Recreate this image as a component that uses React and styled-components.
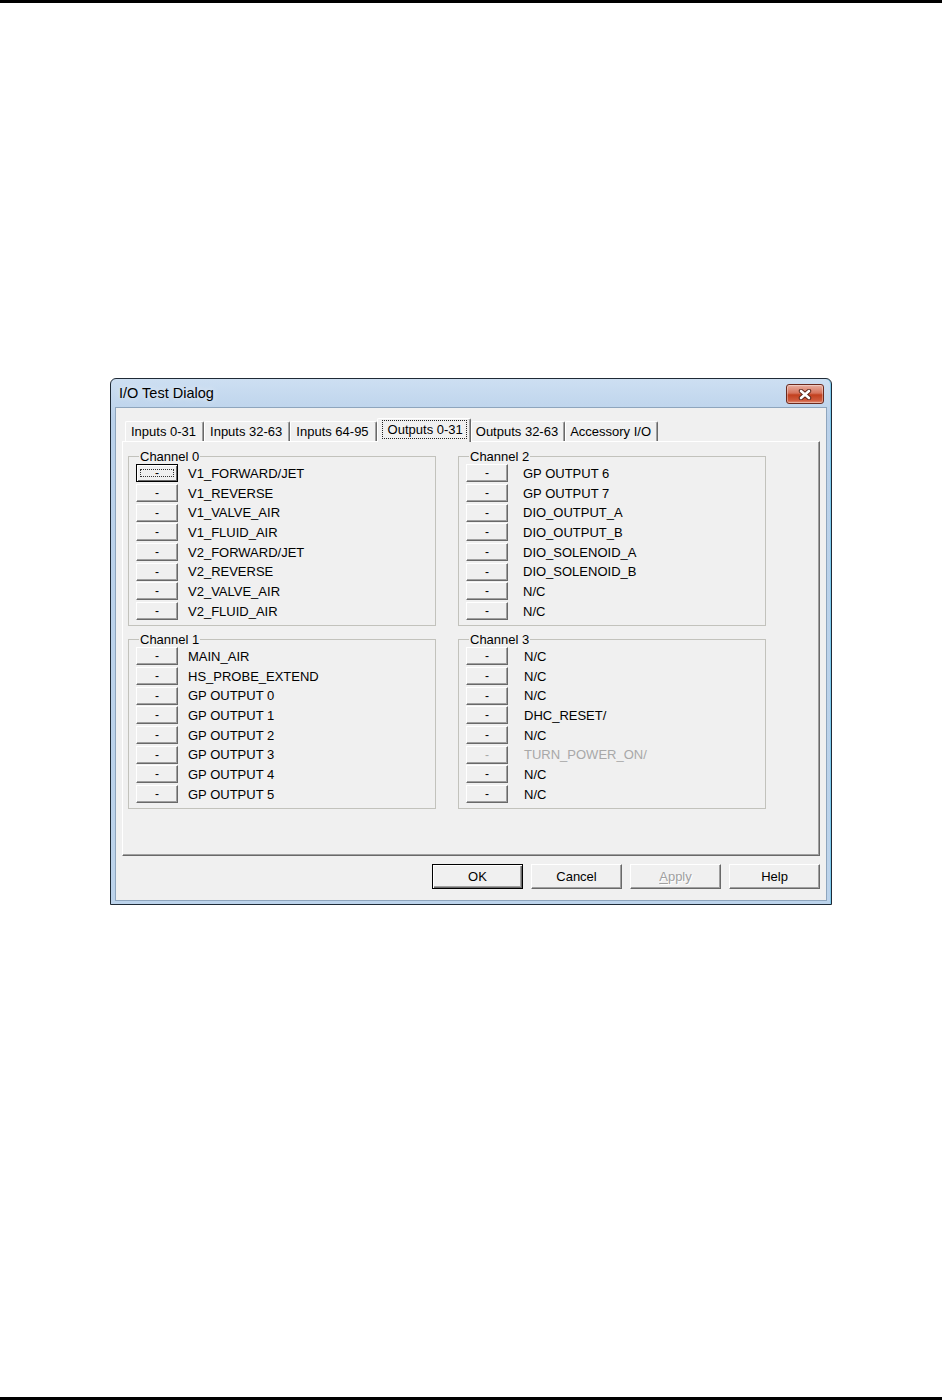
import styled, { createGlobalStyle } from "styled-components";

const GlobalStyle = createGlobalStyle`
  html, body {
    margin: 0;
    padding: 0;
    background: #ffffff;
  }
  * {
    box-sizing: border-box;
  }
`;

const Page = styled.div`
  height: 1400px;
  border-top: 3px solid #000000;
  border-bottom: 3px solid #000000;
  padding: 375px 0 0 110px;
  font-family: "Liberation Sans", Arial, sans-serif;
  font-size: 13px;
  color: #000000;
`;

const Window = styled.div`
  width: 722px;
  height: 527px;
  border: 1px solid #1f2a36;
  border-radius: 6px 6px 0 0;
  background: linear-gradient(#cddff2, #bad1ea 40px, #bcd3eb);
  box-shadow: inset -1px 0 0 #7cc8ec;
  padding: 0 4px 3px 4px;
  display: flex;
  flex-direction: column;
`;

const TitleBar = styled.div`
  height: 28px;
  display: flex;
  align-items: center;
  justify-content: space-between;
  padding-left: 4px;
`;

const Title = styled.span`
  font-size: 14.5px;
  color: #000000;
  text-shadow: 0 0 6px rgba(255, 255, 255, 0.8);
`;

const CloseButton = styled.div`
  width: 38px;
  height: 20px;
  margin: 2px 3px 0 0;
  border: 1px solid #6b2a1e;
  border-radius: 3px;
  background: linear-gradient(#e8b0a2, #d6735c 45%, #c2401f 55%, #cf5a3c 85%, #e39078);
  box-shadow: inset 0 0 0 1px rgba(255, 255, 255, 0.35);
  display: flex;
  align-items: center;
  justify-content: center;
`;

const Body = styled.div`
  flex: 1;
  background: #f0f0f0;
  border: 1px solid #8ea5bd;
  padding: 10px 6px 11px 6px;
  display: flex;
  flex-direction: column;
`;

const TabStrip = styled.div`
  height: 23px;
  display: flex;
  align-items: flex-end;
  padding-left: 3px;
  position: relative;
  z-index: 1;
`;

const tabPadding = {
  before: "0 7px 0 5px",
  active: "0 3px 2px 4px",
  after: "0 6px 0 4px",
};

const Tab = styled.div`
  height: ${(p) => (p.$place === "active" ? 24 : 20)}px;
  margin-bottom: ${(p) => (p.$place === "active" ? -1 : 0)}px;
  padding: ${(p) => tabPadding[p.$place]};
  display: flex;
  align-items: center;
  background: #f0f0f0;
  border-top: 1px solid #ffffff;
  border-left: 1px solid #ffffff;
  border-right: 1px solid #696969;
  border-radius: 2px 2px 0 0;
  box-shadow: inset -1px 0 0 #a0a0a0;
  white-space: nowrap;
`;

const FocusText = styled.span`
  border: 1px dotted #202020;
  padding: 1px 3px 1px 5px;
`;

const Panel = styled.div`
  height: 415px;
  border: 1px solid;
  border-color: #ffffff #696969 #696969 #ffffff;
  box-shadow: inset -1px -1px 0 #a0a0a0;
  padding: 6.5px 0 0 5px;
  display: grid;
  grid-template-columns: 308px 308px;
  column-gap: 22px;
  row-gap: 5.5px;
  align-content: start;
`;

const Group = styled.fieldset`
  margin: 0;
  min-width: 0;
  padding: 0 0 4px 7px;
  border: 1px solid #c2c2bc;
`;

const Caption = styled.legend`
  margin-left: 3px;
  padding: 0 1px;
  font-size: 13px;
  line-height: 15px;
`;

const Row = styled.div`
  height: 19.7px;
  display: flex;
  align-items: center;
`;

const ChanButton = styled.div`
  width: 42px;
  height: 18px;
  flex: none;
  display: flex;
  align-items: center;
  justify-content: center;
  background: #f0f0f0;
  border: 1px solid;
  border-color: ${(p) => (p.$focused ? "#000000" : "#ffffff #696969 #696969 #ffffff")};
  box-shadow: ${(p) =>
    p.$focused
      ? "inset 1px 1px 0 #ffffff, inset -1px -1px 0 #696969"
      : "inset -1px -1px 0 #a0a0a0"};
  color: ${(p) => (p.$disabled ? "#a8a8a8" : "#000000")};
  font-size: 12px;
  line-height: 1;
`;

const FocusRect = styled.span`
  width: 34px;
  height: 8px;
  border: 1px dotted #333333;
  display: flex;
  align-items: center;
  justify-content: center;
`;

const RowLabel = styled.span`
  margin-left: ${(p) => p.$gap}px;
  white-space: nowrap;
  color: ${(p) => (p.$disabled ? "#a8a8a8" : "#000000")};
`;

const Footer = styled.div`
  margin-top: 8px;
  display: flex;
  justify-content: flex-end;
  gap: 8px;
`;

const PushButton = styled.div`
  width: 91px;
  height: 25px;
  display: flex;
  align-items: center;
  justify-content: center;
  background: #f0f0f0;
  border: 1px solid;
  border-color: ${(p) => (p.$default ? "#000000" : "#ffffff #696969 #696969 #ffffff")};
  box-shadow: ${(p) =>
    p.$default
      ? "inset 1px 1px 0 #ffffff, inset -1px -1px 0 #696969, inset -2px -2px 0 #a0a0a0"
      : "inset -1px -1px 0 #a0a0a0"};
  color: ${(p) => (p.$disabled ? "#a0a0a0" : "#000000")};
  text-shadow: ${(p) => (p.$disabled ? "1px 1px 0 #ffffff" : "none")};

  u {
    text-decoration-thickness: 1px;
    text-underline-offset: 2px;
  }
`;

const tabs = ["Inputs 0-31", "Inputs 32-63", "Inputs 64-95", "Outputs 0-31", "Outputs 32-63", "Accessory I/O"];
const activeTab = 3;

const channels = [
  {
    name: "Channel 0",
    gap: 10,
    rows: ["V1_FORWARD/JET", "V1_REVERSE", "V1_VALVE_AIR", "V1_FLUID_AIR", "V2_FORWARD/JET", "V2_REVERSE", "V2_VALVE_AIR", "V2_FLUID_AIR"],
  },
  {
    name: "Channel 2",
    gap: 15,
    rows: ["GP OUTPUT 6", "GP OUTPUT 7", "DIO_OUTPUT_A", "DIO_OUTPUT_B", "DIO_SOLENOID_A", "DIO_SOLENOID_B", "N/C", "N/C"],
  },
  {
    name: "Channel 1",
    gap: 10,
    rows: ["MAIN_AIR", "HS_PROBE_EXTEND", "GP OUTPUT 0", "GP OUTPUT 1", "GP OUTPUT 2", "GP OUTPUT 3", "GP OUTPUT 4", "GP OUTPUT 5"],
  },
  {
    name: "Channel 3",
    gap: 16,
    disabled: [5],
    rows: ["N/C", "N/C", "N/C", "DHC_RESET/", "N/C", "TURN_POWER_ON/", "N/C", "N/C"],
  },
];

function CloseIcon() {
  return (
    <svg width="14" height="11" viewBox="0 0 14 11">
      <path d="M3 2 L11 9 M11 2 L3 9" stroke="#5a2418" strokeWidth="4.4" strokeLinecap="round" />
      <path d="M3 2 L11 9 M11 2 L3 9" stroke="#ffffff" strokeWidth="2.6" strokeLinecap="round" />
    </svg>
  );
}

function Channel({ channel, first }) {
  return (
    <Group>
      <Caption>{channel.name}</Caption>
      {channel.rows.map((label, i) => {
        const disabled = channel.disabled && channel.disabled.includes(i);
        const focused = first && i === 0;
        return (
          <Row key={i}>
            <ChanButton $focused={focused} $disabled={disabled}>
              {focused ? <FocusRect>-</FocusRect> : "-"}
            </ChanButton>
            <RowLabel $gap={channel.gap} $disabled={disabled}>
              {label}
            </RowLabel>
          </Row>
        );
      })}
    </Group>
  );
}

export default function App() {
  return (
    <Page>
      <GlobalStyle />
      <Window>
        <TitleBar>
          <Title>I/O Test Dialog</Title>
          <CloseButton>
            <CloseIcon />
          </CloseButton>
        </TitleBar>
        <Body>
          <TabStrip>
            {tabs.map((t, i) => {
              const place = i === activeTab ? "active" : i < activeTab ? "before" : "after";
              return (
                <Tab key={t} $place={place}>
                  {place === "active" ? <FocusText>{t}</FocusText> : t}
                </Tab>
              );
            })}
          </TabStrip>
          <Panel>
            {channels.map((c, i) => (
              <Channel key={c.name} channel={c} first={i === 0} />
            ))}
          </Panel>
          <Footer>
            <PushButton $default>OK</PushButton>
            <PushButton>Cancel</PushButton>
            <PushButton $disabled>
              <u>A</u>pply
            </PushButton>
            <PushButton>Help</PushButton>
          </Footer>
        </Body>
      </Window>
    </Page>
  );
}
